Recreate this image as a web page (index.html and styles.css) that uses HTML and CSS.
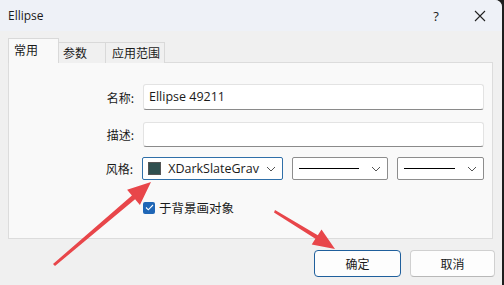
FILE: index.html
```html
<!DOCTYPE html>
<html>
<head>
<meta charset="utf-8">
<link rel="stylesheet" href="styles.css">
</head>
<body>
<div class="win">
  <div class="titlebar">
    <span class="title">Ellipse</span>
    <span class="help">?</span>
    <span class="close"><svg width="12" height="12" viewBox="0 0 12 12"><path d="M1 1L11 11M11 1L1 11" stroke="#222" stroke-width="1.1"/></svg></span>
  </div>
  <div class="body">
    <div class="tabs">
      <div class="tab active">常用</div>
      <div class="tab t2">参数</div>
      <div class="tab t3">应用范围</div>
    </div>
    <div class="panel">
      <div class="row r1">
        <label class="lbl">名称:</label>
        <div class="input">Ellipse 49211</div>
      </div>
      <div class="row r2">
        <label class="lbl">描述:</label>
        <div class="input"></div>
      </div>
      <div class="row r3">
        <label class="lbl">风格:</label>
        <div class="combo c1"><span class="swatch"></span><span class="ctext">XDarkSlateGrav</span><svg class="chev" width="10" height="6" viewBox="0 0 10 6"><path d="M1 1L5 5L9 1" fill="none" stroke="#555" stroke-width="1"/></svg></div>
        <div class="combo c2"><span class="line"></span><svg class="chev" width="10" height="6" viewBox="0 0 10 6"><path d="M1 1L5 5L9 1" fill="none" stroke="#555" stroke-width="1"/></svg></div>
        <div class="combo c3"><span class="line"></span><svg class="chev" width="10" height="6" viewBox="0 0 10 6"><path d="M1 1L5 5L9 1" fill="none" stroke="#555" stroke-width="1"/></svg></div>
      </div>
      <div class="row r4">
        <span class="check"><svg width="9" height="7" viewBox="0 0 9 7"><path d="M1 3.5L3.3 5.8L8 1" fill="none" stroke="#fff" stroke-width="1.1"/></svg></span>
        <span class="cklbl">于背景画对象</span>
      </div>
    </div>
    <div class="buttons">
      <div class="btn primary">确定</div>
      <div class="btn">取消</div>
    </div>
  </div>
  <svg class="arrows" width="504" height="285" viewBox="0 0 504 285">
    <path d="M53 264 L131.9 195.5 L127.1 189.7 L151 182 L139.9 205.1 L135.1 199.3 L55 266 Z" fill="#e8464a"/>
    <path d="M275 210 L317.8 235.2 L321.5 229.5 L335 249 L311.7 244.5 L315.4 238.8 L274 212.5 Z" fill="#e8464a"/>
  </svg>
</div>
</body>
</html>
```
FILE: styles.css
```css
html, body { margin: 0; padding: 0; }
body {
  width: 504px; height: 285px; overflow: hidden;
  background: #1e1e1e;
  font-family: "Open Sans", "Noto Sans CJK SC", sans-serif;
  font-size: 12px; color: #1a1a1a;
}
.win {
  position: relative;
  width: 502px; height: 285px;
  background: #f0f0f0;
  border-top-right-radius: 7px;
  overflow: hidden;
}
.titlebar {
  height: 31px;
  background: #eef1f7;
  display: flex; align-items: center;
  padding-left: 8px;
}
.title { flex: 1; font-size: 12px; }
.help { width: 14px; margin-right: 31px; font-size: 13px; text-align: center; }
.close { width: 12px; margin-right: 16px; display: flex; }
.body { padding: 8px 9px 0 8px; }
.tabs { display: flex; align-items: flex-end; height: 24px; }
.tab {
  height: 20px; line-height: 20px;
  box-sizing: content-box;
  border: 1px solid #d9d9d9; border-bottom: none;
  background: #f0f0f0;
  font-family: "Noto Sans CJK SC", sans-serif; font-size: 12px;
  margin-left: -1px;
}
.tab.active {
  height: 24px; line-height: 22px; background: #f9f9f9;
  margin-left: 0; position: relative; z-index: 1;
  width: 44px; padding-left: 5px;
}
.t2 { width: 42px; padding-left: 4px; }
.t3 { width: 52px; padding-left: 6px; }
.panel {
  height: 177px;
  margin-top: -1px;
  background: #f9f9f9;
  border: 1px solid #dcdcdc;
  box-sizing: border-box;
  padding-top: 21px;
}
.row { display: flex; align-items: center; }
.lbl {
  width: 125px; text-align: right; padding-right: 9px;
  font-family: "Noto Sans CJK SC", sans-serif; font-size: 12px;
}
.input {
  width: 341px; height: 26px; box-sizing: border-box;
  background: #fff;
  border: 1px solid #e3e3e3; border-bottom: 1px solid #8a8a8a;
  border-radius: 3px;
  padding-left: 5px; line-height: 24px; font-size: 12.5px;
}
.r2 { margin-top: 12px; }
.r2 .input { height: 25px; }
.r3 { margin-top: 10px; }
.combo {
  height: 23px; box-sizing: border-box;
  border: 1px solid #8d8d8d; border-radius: 2px;
  background: #fff;
  display: flex; align-items: center;
  margin-right: 8px;
}
.c1 { width: 142px; border-color: #2f6fa8; }
.c2 { width: 96px; margin-left: 1px; }
.c3 { width: 88px; margin-left: 1px; }
.swatch {
  width: 11px; height: 11px; margin-left: 5px;
  background: #2f4f4f; border: 1px solid #555;
}
.ctext { margin-left: 7px; flex: 1; font-size: 12.5px; }
.chev { margin-right: 6px; }
.line { flex: 1; height: 1px; background: #000; margin: 0 12px 0 6px; }
.r4 { margin-top: 18px; padding-left: 134px; }
.check {
  width: 12px; height: 12px; border-radius: 2px;
  background: #1f66b6;
  display: flex; align-items: center; justify-content: center;
  margin-right: 4px;
}
.cklbl { font-family: "Noto Sans CJK SC", sans-serif; font-size: 12.5px; }
.buttons { display: flex; justify-content: flex-end; margin-top: 11px; gap: 9px; }
.btn {
  width: 86px; height: 27px; box-sizing: border-box;
  background: #fdfdfd;
  border: 1px solid #d0d0d0; border-bottom-color: #b8b8b8;
  border-radius: 4px;
  display: flex; align-items: center; justify-content: center;
  font-family: "Noto Sans CJK SC", sans-serif; font-size: 12px;
}
.btn.primary { border: 1px solid #1f5f9c; width: 87px; }
.btn:last-child { width: 85px; margin-right: -2px; }
.arrows { position: absolute; left: 0; top: 0; pointer-events: none; }
```
